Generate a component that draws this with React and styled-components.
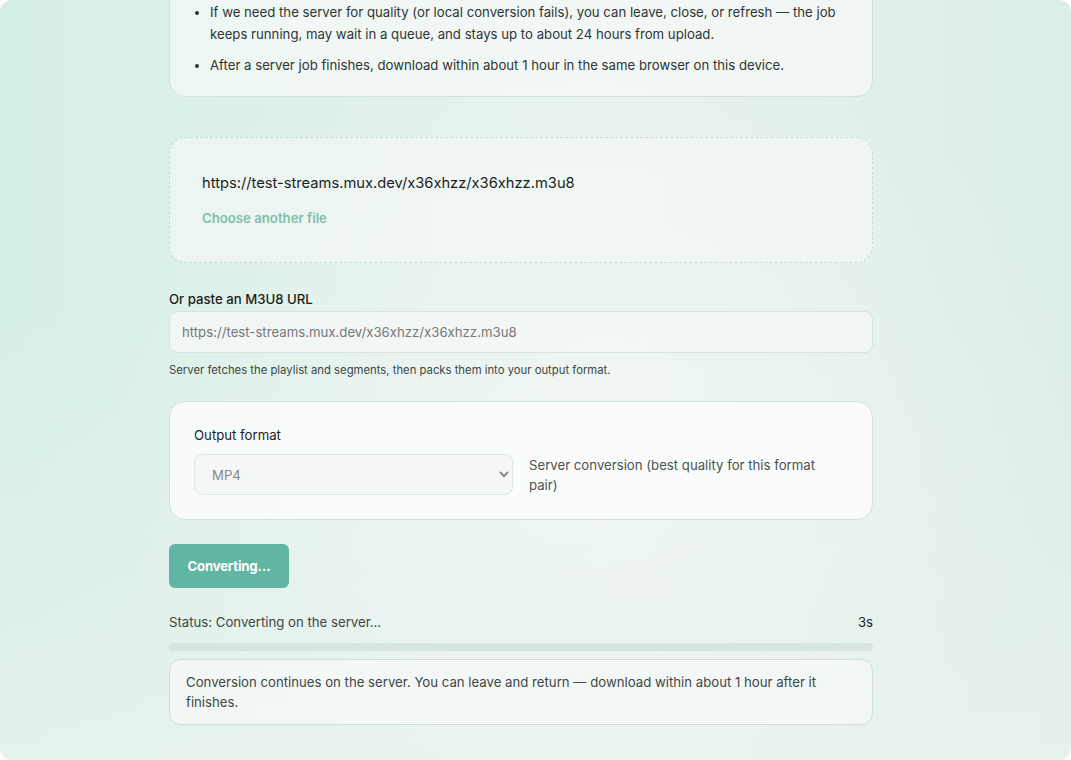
import React from 'react';
import styled, { createGlobalStyle } from 'styled-components';

const GlobalStyle = createGlobalStyle`
  html, body {
    margin: 0;
    padding: 0;
    background: #ffffff;
  }
  body {
    font-family: "Inter", "Noto Sans", "Liberation Sans", sans-serif;
    color: #1f2a27;
    -webkit-font-smoothing: antialiased;
  }
  * { box-sizing: border-box; }
`;

const Frame = styled.div`
  height: 760px;
  padding-right: 29px;
  border-radius: 12px;
  overflow: hidden;
  background:
    radial-gradient(ellipse 45% 55% at 55% 55%, rgba(240, 246, 243, 0.9) 0%, rgba(240, 246, 243, 0) 100%),
    linear-gradient(to bottom, rgba(236, 243, 239, 0) 40%, rgba(236, 243, 239, 0.7) 100%),
    linear-gradient(to right, #d4efe7 0%, #e3f1ec 45%, #e6f1ed 60%, #dcede7 100%);
`;

const Column = styled.main`
  width: 704px;
  margin: -40px auto 0;
  display: flex;
  flex-direction: column;
`;

const Card = styled.section`
  background: rgba(246, 249, 248, 0.72);
  border: 1px solid #d3e1dc;
  border-radius: 16px;
  padding: ${p => p.$pad || '24px'};
`;

const Notes = styled.ul`
  margin: 0;
  padding-left: 16px;
  font-size: 13.2px;
  line-height: 22px;
  color: #2d3633;

  li + li { margin-top: 9px; }
  li::marker { font-size: 12px; }
`;

const DropZone = styled.div`
  margin-top: 40px;
  height: 126px;
  border: 1px dashed #c9dcd5;
  border-radius: 16px;
  background: rgba(242, 247, 245, 0.7);
  padding: 34px 32px 0;
  display: flex;
  flex-direction: column;
  gap: 16px;
`;

const FileName = styled.div`
  font-size: 14.7px;
  line-height: 22px;
  color: #1b1f1e;
`;

const LinkButton = styled.button`
  align-self: flex-start;
  border: none;
  background: none;
  padding: 0;
  font: inherit;
  font-size: 13.2px;
  font-weight: 600;
  color: #7fbfa8;
  cursor: pointer;
`;

const Field = styled.div`
  margin-top: ${p => p.$top || '27px'};
  display: flex;
  flex-direction: column;
`;

const Label = styled.label`
  font-size: 13.2px;
  font-weight: ${p => p.$weight || 500};
  line-height: 18px;
  color: #1b1f1e;
  margin-bottom: ${p => p.$gap || '3px'};
`;

const TextInput = styled.input`
  height: 42px;
  border: 1px solid #d6e3de;
  border-radius: 8px;
  background: rgba(244, 248, 246, 0.8);
  padding: 0 12px;
  font: inherit;
  font-size: 13.2px;
  color: #777;
  outline: none;
`;

const Hint = styled.p`
  margin: 9px 0 0;
  font-size: 11.3px;
  line-height: 16px;
  color: #3d4643;
`;

const FormatCard = styled(Card)`
  margin-top: 23px;
  background: rgba(251, 252, 252, 0.92);
  padding: 24px;
`;

const FormatRow = styled.div`
  display: flex;
  align-items: center;
  gap: 16px;
`;

const Select = styled.select`
  width: 319px;
  height: 41px;
  border: 1px solid #dfe6e3;
  border-radius: 8px;
  background: #f5f7f6;
  padding: 0 13px;
  font: inherit;
  font-size: 13.2px;
  color: #888;
  outline: none;
`;

const FormatNote = styled.span`
  flex: 1;
  max-width: 300px;
  font-size: 13.2px;
  line-height: 20px;
  color: #4b5350;
`;

const PrimaryButton = styled.button`
  margin-top: 24px;
  align-self: flex-start;
  width: 120px;
  height: 44px;
  border: none;
  border-radius: 6px;
  background: #60b6a3;
  color: #ffffff;
  font: inherit;
  font-size: 13.2px;
  font-weight: 700;
  letter-spacing: -0.2px;
`;

const StatusRow = styled.div`
  margin-top: 24px;
  display: flex;
  justify-content: space-between;
  align-items: baseline;
  font-size: 13.2px;
  line-height: 20px;
  color: #3f4744;

  b {
    font-weight: 400;
    color: #1b1f1e;
  }
`;

const Track = styled.div`
  margin-top: 11px;
  height: 8px;
  border-radius: 4px;
  background: #d6e5e0;
  overflow: hidden;
`;

const Fill = styled.div`
  height: 100%;
  background: #d6e5e0;
`;

const InfoBox = styled.div`
  margin-top: 8px;
  border: 1px solid #cfdcd7;
  border-radius: 12px;
  background: rgba(244, 248, 247, 0.85);
  padding: 12px 16px;
  font-size: 13.2px;
  line-height: 20px;
  color: #3f4744;
`;

export default function App() {
  const progress = 0;

  return (
    <>
      <GlobalStyle />
      <Frame>
        <Column>
          <Card $pad="40px 24px 20px 24px">
            <Notes>
              <li>
                If we need the server for quality (or local conversion fails), you can leave, close, or refresh — the job
                keeps running, may wait in a queue, and stays up to about 24 hours from upload.
              </li>
              <li>After a server job finishes, download within about 1 hour in the same browser on this device.</li>
            </Notes>
          </Card>

          <DropZone>
            <FileName>https://test-streams.mux.dev/x36xhzz/x36xhzz.m3u8</FileName>
            <LinkButton>Choose another file</LinkButton>
          </DropZone>

          <Field>
            <Label htmlFor="m3u8">Or paste an M3U8 URL</Label>
            <TextInput id="m3u8" defaultValue="https://test-streams.mux.dev/x36xhzz/x36xhzz.m3u8" />
            <Hint>Server fetches the playlist and segments, then packs them into your output format.</Hint>
          </Field>

          <FormatCard>
            <Field $top="0">
              <Label htmlFor="fmt" $gap="10px" $weight={400}>Output format</Label>
              <FormatRow>
                <Select id="fmt" defaultValue="mp4">
                  <option value="mp4">MP4</option>
                </Select>
                <FormatNote>Server conversion (best quality for this format pair)</FormatNote>
              </FormatRow>
            </Field>
          </FormatCard>

          <PrimaryButton disabled>Converting…</PrimaryButton>

          <StatusRow>
            <span>Status: Converting on the server…</span>
            <b>3s</b>
          </StatusRow>
          <Track>
            <Fill style={{ width: `${progress}%` }} />
          </Track>

          <InfoBox>
            Conversion continues on the server. You can leave and return — download within about 1 hour after it
            finishes.
          </InfoBox>
        </Column>
      </Frame>
    </>
  );
}
